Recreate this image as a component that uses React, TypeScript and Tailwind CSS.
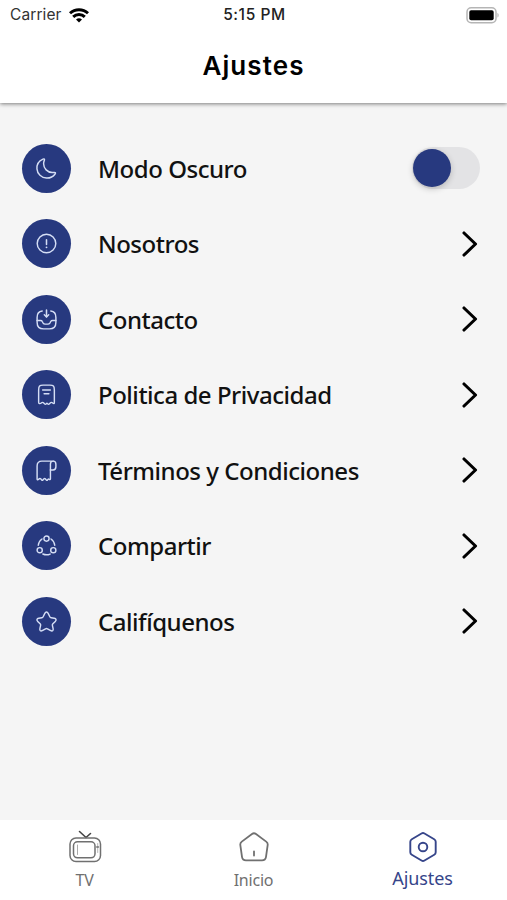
import { useState } from 'react';
import type { ReactNode } from 'react';

const menuIcons: Record<string, ReactNode> = {
  moon: (
    <path d="M2.03 12.42C2.39 17.57 6.76 21.76 11.99 21.99C15.68 22.15 18.98 20.43 20.96 17.72C21.78 16.61 21.34 15.87 19.97 16.12C19.3 16.24 18.61 16.29 17.89 16.26C13 16.06 9 11.97 8.98 7.14C8.97 5.84 9.24 4.61 9.73 3.49C10.27 2.25 9.62 1.66 8.37 2.19C4.41 3.86 1.7 7.85 2.03 12.42Z" />
  ),
  info: (
    <>
      <circle cx="12" cy="12" r="9.7" />
      <path d="M12 8v5" strokeWidth="1.6" />
      <path d="M12 16h.01" strokeWidth="1.9" />
    </>
  ),
  inbox: (
    <>
      <path d="M12 2v7" strokeWidth="1.6" />
      <path d="m9.7 7 2.3 2.3L14.3 7" />
      <path d="M2.2 13h3.6c.8 0 1.500.4 1.8 1.100l.9 1.600c.6 1 1.500 1.100 2 1.100h3c.8 0 1.500-.4 2-1.100l.9-1.600c.4-.7 1.100-1.100 1.800-1.100h3.600" />
      <path d="M7.500 3.200C3.600 3.600 2.200 5.600 2.200 9.800v5c0 5 1.800 7 6.700 7h6.200c4.900 0 6.700-2 6.700-7v-5c0-4.200-1.400-6.200-5.300-6.600" />
    </>
  ),
  receipt: (
    <>
      <path d="M3.800 20V7.200c0-4 1-5 4.600-5h7.200c3.600 0 4.600 1 4.600 5V20c0 1.800-.6 1.900-1.700.9-.9-.9-1.900-.9-2.700 0l-.7.7c-.6.6-1.400.6-2 0-.5-.6-.8-.6-1.200 0-.7.6-1.400.6-2 0l-.7-.7c-.8-.9-1.800-.9-2.700 0-1.100 1-2.700.9-2.700-.9Z" />
      <path d="M8 7.300h8M9.500 11.200h5" />
    </>
  ),
  bill: (
    <>
      <path d="M19 2.200c1.700 0 2.800 1.200 2.800 3.200v2.800c0 2.200-1.200 3.300-3 3.300H16" />
      <path d="M19 2.200H7.200c-3.700 0-5 1.500-5 5v13.600c0 .9.700 1.200 1.400.6l1-.9c.4-.3.9-.3 1.300.1l1.100 1.200c.4.4.9.4 1.300 0l1.100-1.200c.4-.4.9-.4 1.300 0l1.100 1.200c.4.4.9.4 1.300 0l.4-.5c.4-.4.8-.4 1.200-.1.6.6 1.400.4 1.400-.5V5.200c0-2 1.300-3 2.900-3Z" />
    </>
  ),
  share: (
    <>
      <path d="M16.700 5.200c2.200 1.500 3.600 3.900 3.900 6.500" />
      <path d="M3.400 11.700c.3-2.600 1.700-5 3.900-6.500" />
      <path d="M8.200 20.900c2.500 1.100 5.200 1.100 7.600 0" />
      <circle cx="12" cy="4.800" r="2.700" />
      <circle cx="4.900" cy="16.900" r="2.700" />
      <circle cx="19.100" cy="16.900" r="2.700" />
    </>
  ),
  star: (
    <path d="M13.730 3.510l1.760 3.520c.24.49.88.96 1.420 1.050l3.190.53c2.040.34 2.520 1.820 1.050 3.280l-2.480 2.480c-.42.42-.65 1.230-.52 1.810l.71 3.070c.56 2.430-.73 3.370-2.880 2.100l-2.990-1.770c-.54-.32-1.430-.32-1.980 0l-2.990 1.770c-2.140 1.270-3.440.32-2.880-2.100l.71-3.070c.13-.58-.1-1.390-.52-1.810l-2.480-2.480c-1.460-1.460-.99-2.940 1.050-3.280l3.190-.53c.53-.09 1.170-.56 1.410-1.050l1.760-3.520c.96-1.910 2.520-1.910 3.470 0Z" />
  ),
};

const menuItems = [
  { icon: 'moon', label: 'Modo Oscuro', toggle: true },
  { icon: 'info', label: 'Nosotros' },
  { icon: 'inbox', label: 'Contacto' },
  { icon: 'receipt', label: 'Politica de Privacidad' },
  { icon: 'bill', label: 'Términos y Condiciones' },
  { icon: 'share', label: 'Compartir' },
  { icon: 'star', label: 'Califíquenos' },
];

const StatusBar = () => (
  <div className="grid h-[30px] grid-cols-3 items-center pr-2 pl-2.5 font-['Inter',sans-serif] text-[15.5px] leading-none">
    <div className="flex items-center gap-[7px] text-[#333]">
      <span className="tracking-[0.1px]">Carrier</span>
      <svg className="h-[15px] w-5" viewBox="0 0 20 15" fill="none" stroke="#000" strokeWidth="2.9">
        <path d="M1 5.300a13 13 0 0 1 18 0" />
        <path d="M4.200 8.900a8.300 8.300 0 0 1 11.600 0" />
        <path d="m10 14.600-3-3a4.300 4.300 0 0 1 6 0Z" fill="#000" stroke="none" />
      </svg>
    </div>
    <span className="text-center font-medium tracking-[0.600px] whitespace-nowrap text-[#222]">5:15 PM</span>
    <svg className="h-[17px] w-[33px] justify-self-end" viewBox="0 0 33 17">
      <rect x="1" y="0.800" width="29" height="15" rx="4.200" fill="#fff" stroke="#b5b5b5" strokeWidth="1.500" />
      <rect x="3.300" y="3.300" width="24.400" height="10" rx="1.800" fill="#000" />
      <path d="M31.500 6v4.500c1.400-.6 1.400-3.900 0-4.500Z" fill="#aaa" />
    </svg>
  </div>
);

const Header = () => (
  <header className="relative z-10 h-[103px] shrink-0 bg-white shadow-[0_1px_4px_rgba(0,0,0,0.5)]">
    <StatusBar />
    <h1 className="pt-[18px] text-center font-['Inter',sans-serif] text-[26px] leading-9 font-semibold tracking-[1.100px] text-black">
      Ajustes
    </h1>
  </header>
);

const Toggle = ({ on, onChange }: { on: boolean; onChange: () => void }) => (
  <button
    type="button"
    role="switch"
    aria-checked={on}
    aria-label="Modo Oscuro"
    onClick={onChange}
    className={`flex h-[42px] w-[68px] items-center rounded-full bg-[#e3e3e5] px-px ${on ? 'justify-end' : 'justify-start'}`}
  >
    <span className="size-[38px] rounded-full bg-[#27397f] shadow-[0_2px_6px_rgba(0,0,0,0.2)]" />
  </button>
);

const tabs = [
  {
    label: 'TV',
    icon: (
      <svg className="h-[34px] w-[34px]" viewBox="0 0 34 34" fill="none" stroke="currentColor" strokeWidth="1.5" strokeLinecap="round">
        <path d="m11.500 1.500 6.500 6L22.500 3.500" stroke="#444" strokeWidth="1.600" />
        <rect x="2" y="8" width="30.500" height="23.500" rx="6" />
        <rect x="5.500" y="11.800" width="21.500" height="16" rx="4" />
        <path d="M9.500 15v9.500" strokeWidth="0.600" />
        <path d="M29.700 13.500v9" strokeWidth="0.500" />
        <path d="M28.800 17h1.600" strokeWidth="1.600" />
      </svg>
    ),
  },
  {
    label: 'Inicio',
    icon: (
      <svg className="h-[34px] w-[34px]" viewBox="0 0 34 34" fill="none" stroke="currentColor" strokeWidth="1.8" strokeLinecap="round" strokeLinejoin="round">
        <path d="M15 4a3.400 3.400 0 0 1 4 0l10.200 7.600c1.300 1 1.700 1.800 1.500 3.300l-1.700 12c-.3 2.200-1.700 3.400-4 3.400H9c-2.300 0-3.700-1.200-4-3.400L3.300 14.900c-.2-1.500.2-2.300 1.500-3.300Z" />
        <path d="M17 21.500v4" />
      </svg>
    ),
  },
  {
    label: 'Ajustes',
    icon: (
      <svg className="h-[34px] w-[34px]" viewBox="0 0 34 34" fill="none" stroke="currentColor" strokeWidth="1.9" strokeLinejoin="round">
        <path d="M15.500 3.500a3 3 0 0 1 3 0l9.700 5.700a3 3 0 0 1 1.500 2.600v10.400a3 3 0 0 1-1.500 2.600l-9.700 5.700a3 3 0 0 1-3 0l-9.700-5.700a3 3 0 0 1-1.500-2.600V11.800a3 3 0 0 1 1.500-2.600Z" />
        <circle cx="17" cy="17" r="4.300" />
      </svg>
    ),
  },
];

const App = () => {
  const [dark, setDark] = useState(false);
  const [active, setActive] = useState('Ajustes');

  return (
    <div className="flex h-[900px] w-[507px] flex-col overflow-hidden bg-[#f5f5f5] font-['Noto_Sans',sans-serif]">
      <Header />

      {/* Settings list */}
      <main className="flex-1 pt-[27.5px] pr-[27px] pl-[22px]">
        {menuItems.map((item) => (
          <div key={item.label} className="flex h-[75.5px] items-center">
            <div className="flex size-[49px] shrink-0 items-center justify-center rounded-full bg-[#27397f]">
              <svg className="size-[23px]" viewBox="0 0 24 24" fill="none" stroke="#d5def5" strokeWidth="1.5" strokeLinecap="round" strokeLinejoin="round">
                {menuIcons[item.icon]}
              </svg>
            </div>
            <span className="ml-[27px] flex-1 pt-px text-[24px] leading-8 font-medium tracking-[-0.47px] whitespace-nowrap text-[#111]">
              {item.label}
            </span>
            {item.toggle ? (
              <Toggle on={dark} onChange={() => setDark(!dark)} />
            ) : (
              <svg className="mr-[2px] h-[26px] w-4" viewBox="0 0 16 26" fill="none" stroke="#000" strokeWidth="3.1" strokeLinecap="round" strokeLinejoin="round">
                <path d="M2 2l11.500 11L2 24" />
              </svg>
            )}
          </div>
        ))}
      </main>

      {/* Bottom tabs */}
      <nav className="grid h-20 shrink-0 grid-cols-3 bg-white">
        {tabs.map((tab) => (
          <button
            key={tab.label}
            type="button"
            onClick={() => setActive(tab.label)}
            className={`flex flex-col items-center pt-2.5 ${active === tab.label ? 'text-[#36458a]' : 'text-[#707070]'}`}
          >
            {tab.icon}
            <span className={active === tab.label ? 'mt-0.5 text-[18px] leading-6 tracking-[-0.1px]' : 'mt-1 text-[16px] leading-6 tracking-[-0.2px]'}>
              {tab.label}
            </span>
          </button>
        ))}
      </nav>
    </div>
  );
};

export default App;
